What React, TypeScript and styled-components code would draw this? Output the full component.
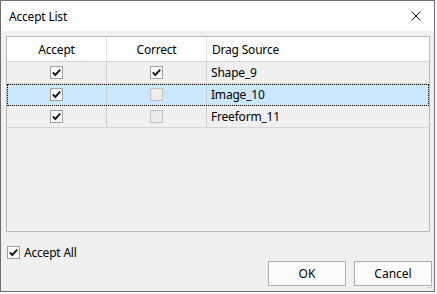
import styled, { createGlobalStyle } from 'styled-components';

const GlobalStyle = createGlobalStyle`
  html, body {
    margin: 0;
    padding: 0;
    background: #ffffff;
  }
  body {
    font-family: "Segoe UI", "Noto Sans", "Open Sans", sans-serif;
    font-size: 12px;
    color: #000;
  }
`;

const Window = styled.div`
  width: 435px;
  height: 292px;
  box-sizing: border-box;
  border: 1px solid #6e6e6e;
  background: #f0f0f0;
  display: flex;
  flex-direction: column;
  position: relative;
`;

const TitleBar = styled.div`
  height: 30px;
  background: #ffffff;
  display: flex;
  align-items: center;
  justify-content: space-between;
  padding: 0 13px 0 8px;
  flex-shrink: 0;
`;

const Title = styled.span`
  font-size: 12px;
  letter-spacing: -0.2px;
`;

const Body = styled.div`
  flex: 1;
  display: flex;
  flex-direction: column;
  padding: 5px 4px 4px 5px;
`;

const ListFrame = styled.div`
  height: 196px;
  box-sizing: border-box;
  border: 1px solid #b9b9b9;
  display: flex;
  flex-direction: column;
`;

const HeaderRow = styled.div`
  display: grid;
  grid-template-columns: 100px 100px 1fr;
  height: 25px;
  box-sizing: border-box;
  background: #ffffff;
  border-bottom: 1px solid #d5d5d5;
`;

const HeaderCell = styled.div<{ $left?: boolean }>`
  display: flex;
  align-items: center;
  justify-content: ${p => (p.$left ? 'flex-start' : 'center')};
  padding-left: ${p => (p.$left ? '5px' : '0')};
  border-right: ${p => (p.$left ? 'none' : '1px solid #e5e5e5')};
  letter-spacing: -0.2px;
`;

const Row = styled.div<{ $selected?: boolean }>`
  display: grid;
  grid-template-columns: 100px 100px 1fr;
  height: 22px;
  box-sizing: border-box;
  border-bottom: 1px solid #d5d5d5;
  background: ${p => (p.$selected ? '#cce8ff' : 'transparent')};
  outline: ${p => (p.$selected ? '1px dotted #000' : 'none')};
  outline-offset: -1px;
`;

const Cell = styled.div<{ $left?: boolean }>`
  display: flex;
  align-items: center;
  justify-content: ${p => (p.$left ? 'flex-start' : 'center')};
  padding-left: ${p => (p.$left ? '4px' : '0')};
  border-right: ${p => (p.$left ? 'none' : '1px solid #d0d0d0')};
  letter-spacing: -0.2px;
`;

const Box = styled.span<{ $disabled?: boolean }>`
  width: 13px;
  height: 13px;
  box-sizing: border-box;
  border: 1px solid ${p => (p.$disabled ? '#c2c2c2' : '#a0a0a0')};
  background: ${p => (p.$disabled ? '#ececec' : '#ffffff')};
  display: inline-flex;
  align-items: center;
  justify-content: center;
`;

const Footer = styled.div`
  flex: 1;
  display: flex;
  flex-direction: column;
  justify-content: space-between;
  padding-top: 12px;
`;

const CheckRow = styled.label`
  display: flex;
  align-items: center;
  gap: 4px;
  padding-left: 1px;
  letter-spacing: -0.2px;
`;

const Buttons = styled.div`
  display: flex;
  justify-content: flex-end;
  gap: 8px;
  margin-right: -2px;
  padding-bottom: 3px;
`;

const Button = styled.button`
  width: 78px;
  height: 25px;
  box-sizing: border-box;
  border: 1px solid #adadad;
  background: #fbfbfb;
  font-family: inherit;
  font-size: 12px;
  color: #000;
  padding: 0;
`;

const Grip = styled.svg`
  position: absolute;
  right: 1px;
  bottom: 1px;
`;

const Check = () => (
  <svg width="11" height="11" viewBox="0 0 11 11">
    <path d="M1.8 5.4 L4.3 8 L9.2 2.6" fill="none" stroke="#1a1a1a" strokeWidth="2" />
  </svg>
);

const CheckBox = ({ checked, disabled }: { checked?: boolean; disabled?: boolean }) => (
  <Box $disabled={disabled}>{checked && <Check />}</Box>
);

const rows = [
  { name: 'Shape_9', correct: true },
  { name: 'Image_10', correct: false, selected: true },
  { name: 'Freeform_11', correct: false },
];

export default function App() {
  return (
    <>
      <GlobalStyle />
      <Window>
        <TitleBar>
          <Title>Accept List</Title>
          <svg width="10" height="10" viewBox="0 0 10 10">
            <path d="M0.5 0.5 L9.5 9.5 M9.5 0.5 L0.5 9.5" stroke="#111" strokeWidth="1" />
          </svg>
        </TitleBar>
        <Body>
          <ListFrame>
            <HeaderRow>
              <HeaderCell>Accept</HeaderCell>
              <HeaderCell>Correct</HeaderCell>
              <HeaderCell $left>Drag Source</HeaderCell>
            </HeaderRow>
            {rows.map(r => (
              <Row key={r.name} $selected={r.selected}>
                <Cell><CheckBox checked /></Cell>
                <Cell><CheckBox checked={r.correct} disabled={!r.correct} /></Cell>
                <Cell $left>{r.name}</Cell>
              </Row>
            ))}
          </ListFrame>
          <Footer>
            <CheckRow>
              <CheckBox checked />
              Accept All
            </CheckRow>
            <Buttons>
              <Button>OK</Button>
              <Button>Cancel</Button>
            </Buttons>
          </Footer>
        </Body>
        <Grip width="7" height="7" viewBox="0 0 7 7">
          <rect x="5" y="0" width="1" height="1" fill="#bbb" />
          <rect x="3" y="2" width="1" height="1" fill="#bbb" />
          <rect x="5" y="2" width="1" height="1" fill="#bbb" />
          <rect x="1" y="4" width="1" height="1" fill="#bbb" />
          <rect x="3" y="4" width="1" height="1" fill="#bbb" />
          <rect x="5" y="4" width="1" height="1" fill="#bbb" />
        </Grip>
      </Window>
    </>
  );
}
